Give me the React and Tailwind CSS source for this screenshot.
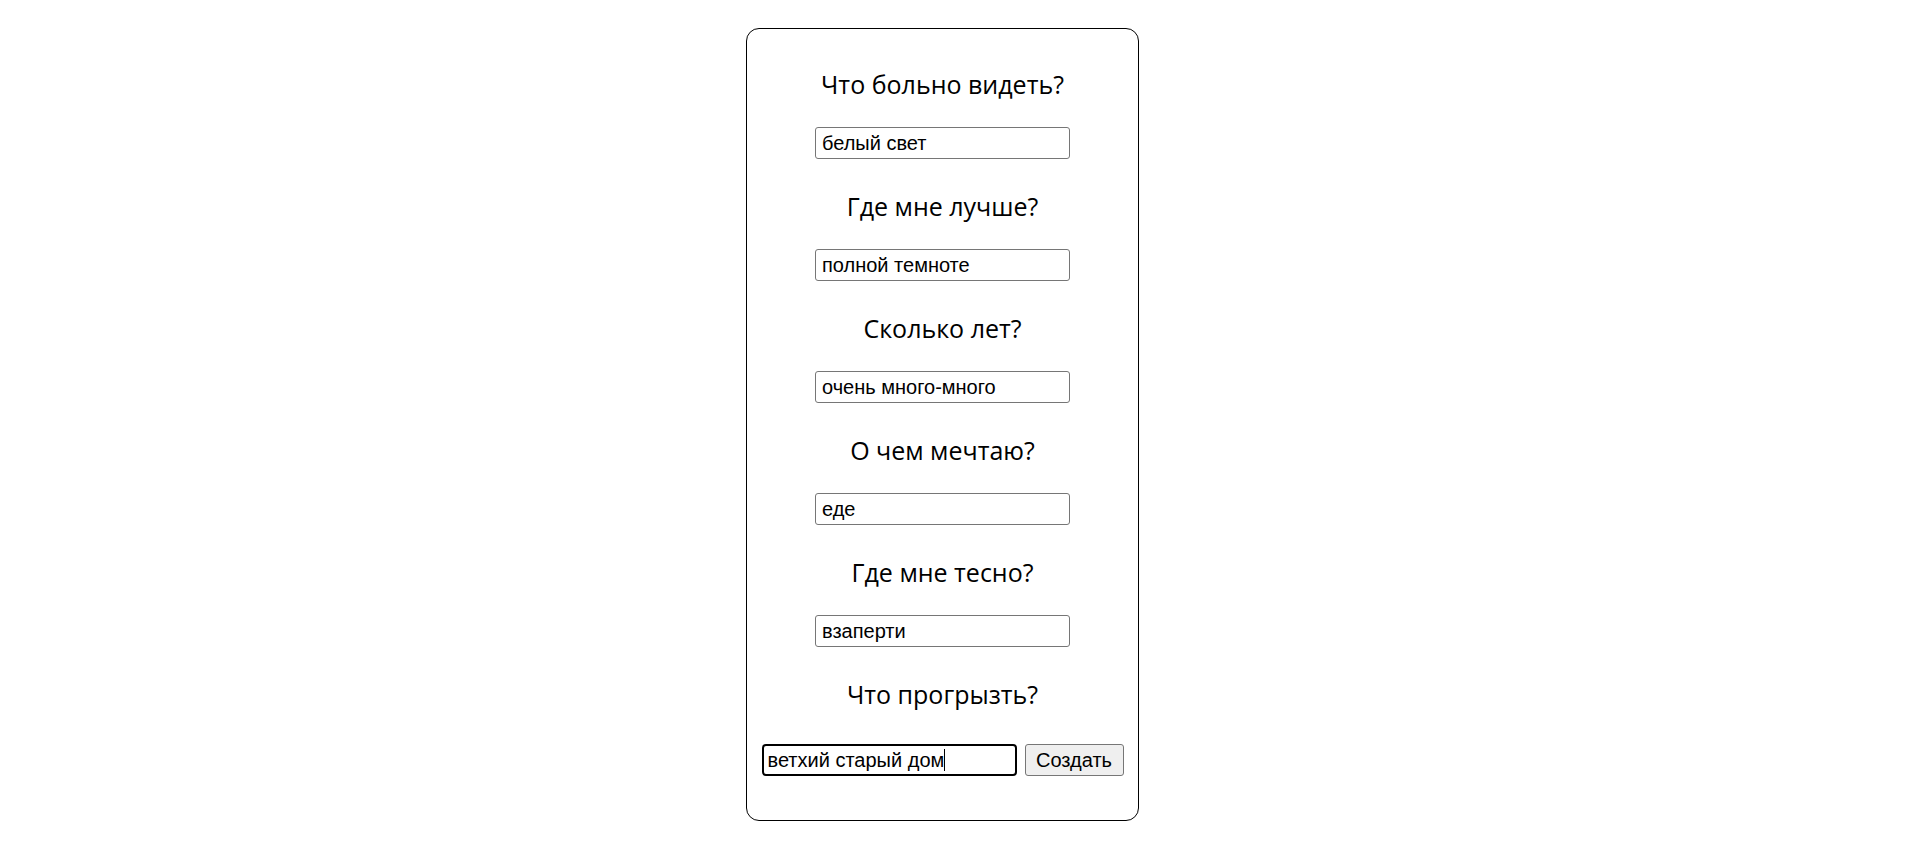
const questions = [
  { q: "Что больно видеть?", a: "белый свет" },
  { q: "Где мне лучше?", a: "полной темноте" },
  { q: "Сколько лет?", a: "очень много-много" },
  { q: "О чем мечтаю?", a: "еде" },
  { q: "Где мне тесно?", a: "взаперти" },
];

const last = "ветхий старый дом";

function Question({ text, className = "" }) {
  return (
    <h2
      className={`text-center text-[25px] leading-8 font-normal text-black font-['Open_Sans',sans-serif] ${className}`}
    >
      {text}
    </h2>
  );
}

export default function App() {
  return (
    <div className="min-h-screen bg-white pl-[746px] pt-[28px]">
      <form
        onSubmit={(e) => e.preventDefault()}
        className="w-[393px] border border-black rounded-[13px] px-[15px] pt-[39px] pb-[44px] flex flex-col items-center"
      >
        {questions.map((item, i) => (
          <div key={i} className={`flex flex-col items-center ${i > 0 ? "mt-[31px]" : ""}`}>
            <Question text={item.q} />
            <input
              type="text"
              defaultValue={item.a}
              className="mt-[27px] w-[255px] h-[32px] border border-[#767676] rounded-[3px] px-[6px] text-[20px] text-black font-['Liberation_Sans',Arial,sans-serif] outline-none"
            />
          </div>
        ))}

        <Question text="Что прогрызть?" className="mt-[31px]" />
        <div className="mt-[34px] flex items-center gap-[8px]">
          <div className="relative">
            <input
              type="text"
              defaultValue={last}
              className="w-[255px] h-[32px] border-2 border-black rounded-[4px] px-[4px] text-[20px] text-black font-['Liberation_Sans',Arial,sans-serif] outline-none caret-transparent"
            />
            {/* fake caret at end of text */}
            <div className="absolute inset-0 pointer-events-none flex items-center pl-[6px] text-[20px] font-['Liberation_Sans',Arial,sans-serif]">
              <span className="text-transparent whitespace-pre">{last}</span>
              <span className="w-px h-[22px] bg-black" />
            </div>
          </div>
          <button
            type="submit"
            className="h-[32px] w-[99px] bg-[#efefef] border border-[#767676] rounded-[3px] text-[20px] text-black font-['Liberation_Sans',Arial,sans-serif]"
          >
            Создать
          </button>
        </div>
      </form>
    </div>
  );
}
